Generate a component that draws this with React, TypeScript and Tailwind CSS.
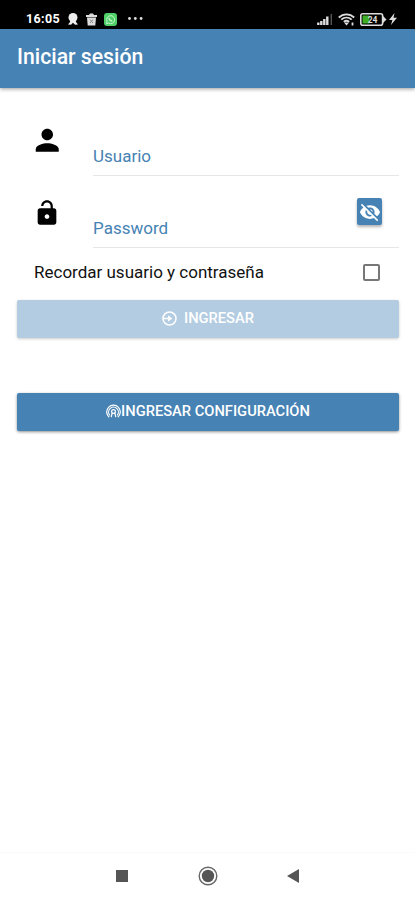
import { useState } from "react";

const StatusBar = () => (
  <div className="flex h-[29px] items-center justify-between bg-black pt-[9px] pr-[18px] pl-[26px] text-white">
    <div className="flex items-center">
      <span className="w-[35px] text-[12.5px] leading-4 font-bold tracking-[0.35px]">
        16:05
      </span>
      <svg className="ml-[6px] h-3 w-3" viewBox="0 0 12 12" fill="#eee">
        <circle cx="6" cy="4.5" r="4.5" />
        <path d="M3.5 6h5l.5 3 2 2.5-3 .2-2-2-2 2-3-.2L3 9z" />
      </svg>
      <svg className="ml-[7px] h-[13px] w-[11px]" viewBox="0 0 11 13">
        <path d="M0 2h3l1-1.5h3L8 2h3v2H0zM1 4.5h9l-.7 8H1.7z" fill="#ddd" />
        <path d="m4 6.5 3 3.5m0-3.5L4 10" stroke="#888" />
      </svg>
      <svg className="ml-[7px] h-[13px] w-[13px]" viewBox="0 0 13 13">
        <rect width="13" height="13" rx="3" fill="#4fd168" />
        <path
          d="m2.5 10.7.6-2.2a4 4 0 1 1 1.5 1.6z"
          fill="none"
          stroke="#c9f5d0"
          strokeWidth="1"
        />
        <path
          d="M5 4.7c-.4 1.4 1.8 3.6 3.3 3.2"
          fill="none"
          stroke="#c9f5d0"
          strokeWidth="1.3"
        />
      </svg>
      <svg
        className="mb-[2px] ml-[11px] h-[3px] w-[15px]"
        viewBox="0 0 15 3"
        fill="#ddd"
      >
        <circle cx="1.5" cy="1.5" r="1.4" />
        <circle cx="7.3" cy="1.5" r="1.4" />
        <circle cx="13.1" cy="1.5" r="1.4" />
      </svg>
    </div>
    <div className="flex items-center">
      <svg className="h-3 w-4" viewBox="0 0 16 12">
        <path
          d="M1.3 12V9.5M4.3 12V8M7.3 12V6M10.3 12V3.5"
          stroke="#ddd"
          strokeWidth="2.4"
        />
        <path d="M14.3 12V1" stroke="#555" strokeWidth="1.4" />
      </svg>
      <svg
        className="ml-[5px] h-[13px] w-[17px]"
        viewBox="0 0 17 13"
        fill="none"
        stroke="#ddd"
        strokeWidth="1.8"
      >
        <path d="M.8 4.5c4.5-4.3 10.9-4.3 15.4 0M3.3 6.7c3.1-2.9 7.3-2.9 10.4 0M5.8 8.9c1.6-1.4 3.8-1.4 5.4 0" />
        <path d="m8.5 12.5-2.5-3h5z" fill="#ddd" stroke="none" />
        <path d="M14.5 9.5v3" />
      </svg>
      <svg className="ml-[5px] h-[13px] w-[27px]" viewBox="0 0 27 13">
        <rect
          x=".8"
          y=".8"
          width="21.8"
          height="11.4"
          rx="2"
          fill="none"
          stroke="#ddd"
          strokeWidth="1.6"
        />
        <path d="M22.5 2.5 26.5 6.5l-4 4z" fill="#ddd" />
        <rect x="2.5" y="2.5" width="7" height="8" fill="#3fae22" />
        <text
          x="12.6"
          y="9.8"
          fontSize="8.5"
          fontWeight="700"
          textAnchor="middle"
          fill="#ddd"
        >
          24
        </text>
      </svg>
      <svg className="ml-[2px] h-3 w-2" viewBox="0 0 8 12" fill="#ddd">
        <path d="M5.5 0 0 7h3.4L2 12l6-7.2H4.5z" />
      </svg>
    </div>
  </div>
);

const PersonIcon = () => (
  <svg className="mt-[-1.5px] ml-[12.5px] h-[34.5px] w-[34.5px]" viewBox="0 0 24 24">
    <path d="M12 12c2.21 0 4-1.79 4-4s-1.79-4-4-4-4 1.79-4 4 1.79 4 4 4zm0 2c-2.67 0-8 1.34-8 4v2h16v-2c0-2.66-5.33-4-8-4z" />
  </svg>
);

const UnlockIcon = () => (
  <svg className="mt-[3px] ml-[15.5px] h-7 w-7" viewBox="0 0 24 24">
    <path
      fillRule="evenodd"
      d="M12 17c1.1 0 2-.9 2-2s-.9-2-2-2-2 .9-2 2 .9 2 2 2zm6-9h-1V6c0-2.76-2.24-5-5-5S7 3.24 7 6h1.9c0-1.71 1.39-3.1 3.1-3.1s3.1 1.39 3.1 3.1v2H6c-1.1 0-2 .9-2 2v10c0 1.1.9 2 2 2h12c1.1 0 2-.9 2-2V10c0-1.1-.9-2-2-2z"
    />
  </svg>
);

const EyeOffIcon = () => (
  <svg className="h-[22px] w-[22px]" viewBox="0 0 24 24" fill="#fff">
    <path d="M12 7c2.76 0 5 2.24 5 5 0 .65-.13 1.26-.36 1.83l2.92 2.92c1.51-1.26 2.7-2.89 3.43-4.75-1.73-4.39-6-7.5-11-7.5-1.4 0-2.74.25-3.98.7l2.16 2.16C10.74 7.13 11.35 7 12 7zM2 4.27l2.28 2.28.46.46C3.08 8.3 1.78 10.02 1 12c1.73 4.39 6 7.5 11 7.5 1.55 0 3.03-.3 4.38-.84l.42.42L19.73 22 21 20.73 3.27 3 2 4.27zM7.53 9.8l1.55 1.55c-.05.21-.08.43-.08.65 0 1.66 1.34 3 3 3 .22 0 .44-.03.65-.08l1.55 1.55c-.67.33-1.41.53-2.2.53-2.76 0-5-2.24-5-5 0-.79.2-1.53.53-2.2zm4.31-.78 3.15 3.15.02-.16c0-1.66-1.34-3-3-3l-.17.01z" />
  </svg>
);

const LoginIcon = () => (
  <svg
    className="h-[15px] w-[15px]"
    viewBox="0 0 15 15"
    fill="none"
    stroke="#fff"
    strokeWidth="1.5"
  >
    <circle cx="7.5" cy="7.5" r="6.5" />
    <path d="M1 7.5h6.5" />
    <path d="m6 4.2 4.4 3.3L6 10.8z" fill="#fff" stroke="none" />
  </svg>
);

const BroadcastIcon = () => (
  <svg
    className="h-[15px] w-[15px]"
    viewBox="0 0 15 15"
    fill="none"
    stroke="#fff"
    strokeWidth="1.2"
  >
    <path d="M3.2 13.2a6.8 6.8 0 1 1 8.6 0M3.9 11.4a4.9 4.9 0 1 1 7.2 0M5.2 13.2l.9-3.9h2.8l.9 3.9" />
    <circle cx="7.5" cy="7.6" r="1.9" />
  </svg>
);

const NavigationBar = () => (
  <div className="flex h-12 items-center justify-between border-t border-[#fafafa] px-[116px] pb-[2px]">
    <div className="h-3 w-3 bg-[#555]" />
    <svg className="h-5 w-5" viewBox="0 0 20 20">
      <circle cx="10" cy="10" r="8.8" fill="none" stroke="#666" strokeWidth="1.4" />
      <circle cx="10" cy="10" r="6.2" fill="#555" />
    </svg>
    <svg className="h-[14px] w-3" viewBox="0 0 12 14" fill="#555">
      <path d="M12 0v14L0 7z" />
    </svg>
  </div>
);

export default function App() {
  const [remember, setRemember] = useState(false);
  const [showPassword, setShowPassword] = useState(false);

  return (
    <div className="flex h-[900px] w-full flex-col bg-white font-[Roboto,sans-serif]">
      <StatusBar />
      <header className="flex h-[59px] items-center bg-[#4682b4] pb-[3px] pl-[17px] shadow-[0_1px_4px_rgba(0,0,0,0.4)]">
        <h1 className="text-[21.2px] font-medium text-white">Iniciar sesión</h1>
      </header>

      <main className="flex-1 pt-[36px] pr-4 pl-[17px]">
        <div className="flex h-[52px]">
          <div className="w-[76px]">
            <PersonIcon />
          </div>
          <div className="flex flex-1 items-end border-b border-[#e6e6e6] pb-[7px]">
            <input
              className="w-full text-[17px] leading-6 text-[#4682b4] outline-none placeholder:text-[#4682b4] placeholder:opacity-100"
              placeholder="Usuario"
            />
          </div>
        </div>

        <div className="mt-5 flex h-[52px]">
          <div className="w-[76px]">
            <UnlockIcon />
          </div>
          <div className="flex flex-1 items-end border-b border-[#e6e6e6] pb-[7px]">
            <input
              className="min-w-0 flex-1 text-[17px] leading-6 text-[#4682b4] outline-none placeholder:text-[#4682b4] placeholder:opacity-100"
              type={showPassword ? "text" : "password"}
              placeholder="Password"
            />
            <button
              className="mr-[17px] mb-[15px] flex h-[27px] w-[25px] items-center justify-center rounded-[2px] bg-[#4682b4] shadow-[0_2px_3px_rgba(0,0,0,0.3)]"
              onClick={() => setShowPassword(!showPassword)}
            >
              <EyeOffIcon />
            </button>
          </div>
        </div>

        <label className="flex h-[52px] items-center justify-between pr-[19px] pb-[3px] pl-[17px] text-[17px] text-[#111]">
          Recordar usuario y contraseña
          <input
            type="checkbox"
            className="h-[17px] w-[17px] appearance-none rounded-[2px] border-2 border-[#777] checked:bg-[#4682b4]"
            checked={remember}
            onChange={() => setRemember(!remember)}
          />
        </label>

        <button className="flex h-[38px] w-full items-center justify-center gap-[7px] rounded-[2px] bg-[#b3cce1] pb-[2px] text-[14.7px] font-medium text-white shadow-[0_1px_3px_rgba(0,0,0,0.2)]">
          <LoginIcon />
          <span>INGRESAR</span>
        </button>

        <button className="mt-[55px] flex h-[38px] w-full items-center justify-center rounded-[2px] bg-[#4682b4] pb-[2px] text-[14.7px] font-medium text-white shadow-[0_1px_3px_rgba(0,0,0,0.45)]">
          <BroadcastIcon />
          <span>INGRESAR CONFIGURACIÓN</span>
        </button>
      </main>

      <NavigationBar />
    </div>
  );
}
